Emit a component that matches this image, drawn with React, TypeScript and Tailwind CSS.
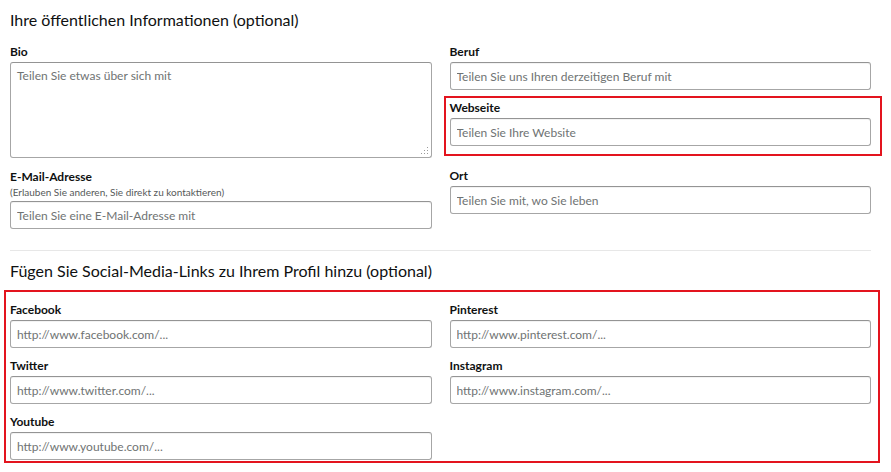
import React from "react";

function Label({ children }: { children: React.ReactNode }) {
  return <div className="text-[12px] leading-[16px] font-bold text-[#0f1111]">{children}</div>;
}

function TextInput({ placeholder }: { placeholder: string }) {
  return (
    <input
      type="text"
      placeholder={placeholder}
      className="block w-full h-[28px] rounded-[3px] border border-[#a6a6a6] border-t-[#949494] bg-white px-[6px] text-[12px] text-[#0f1111] placeholder:text-[#6f7373] outline-none shadow-[inset_0_1px_0_rgba(15,17,17,0.05)]"
    />
  );
}

function Field({ label, placeholder, className = "" }: { label: string; placeholder: string; className?: string }) {
  return (
    <div className={className}>
      <Label>{label}</Label>
      <div className="mt-[2px]">
        <TextInput placeholder={placeholder} />
      </div>
    </div>
  );
}

export default function App() {
  return (
    <div className="w-[891px] h-[472px] overflow-hidden bg-white font-['Lato',sans-serif] text-[#0f1111]">
      <div className="pl-[10px] pr-[20px] pt-[10px]">
        <h2 className="text-[16px] leading-[20px] font-normal">Ihre öffentlichen Informationen (optional)</h2>

        <div className="mt-[14px] grid grid-cols-2 gap-x-[18px]">
          {/* left column */}
          <div>
            <Label>Bio</Label>
            <div className="relative mt-[2px]">
              <textarea
                placeholder="Teilen Sie etwas über sich mit"
                className="block w-full h-[96px] resize-none rounded-[3px] border border-[#a6a6a6] border-t-[#949494] bg-white px-[6px] pt-[4px] text-[12px] leading-[17px] placeholder:text-[#6f7373] outline-none"
              />
              <svg className="absolute right-[3px] bottom-[3px]" width="9" height="9" viewBox="0 0 9 9">
                <g fill="#9a9a9a">
                  <rect x="7" y="1" width="1" height="1" />
                  <rect x="4" y="4" width="1" height="1" />
                  <rect x="7" y="4" width="1" height="1" />
                  <rect x="1" y="7" width="1" height="1" />
                  <rect x="4" y="7" width="1" height="1" />
                  <rect x="7" y="7" width="1" height="1" />
                </g>
              </svg>
            </div>

            <div className="mt-[11px]">
              <Label>E-Mail-Adresse</Label>
              <div className="text-[10px] leading-[15px] text-[#565959]">(Erlauben Sie anderen, Sie direkt zu kontaktieren)</div>
              <div className="mt-[1px]">
                <TextInput placeholder="Teilen Sie eine E-Mail-Adresse mit" />
              </div>
            </div>
          </div>

          {/* right column */}
          <div>
            <Field label="Beruf" placeholder="Teilen Sie uns Ihren derzeitigen Beruf mit" />
            <div className="mt-[6px] ml-[-6px] mr-[-11px] border-2 border-[#e3141e] pl-[4px] pr-[9px] pt-[2px] pb-[8px]">
              <Field label="Webseite" placeholder="Teilen Sie Ihre Website" />
            </div>
            <Field className="mt-[12px]" label="Ort" placeholder="Teilen Sie mit, wo Sie leben" />
          </div>
        </div>

        <div className="mt-[21px] h-px bg-[#e7e7e7]" />

        <h2 className="mt-[10px] text-[16px] leading-[20px] font-normal">Fügen Sie Social-Media-Links zu Ihrem Profil hinzu (optional)</h2>

        <div className="mt-[9px] ml-[-6px] mr-[-9px] border-2 border-[#e3141e] pl-[4px] pr-[7px] pt-[10px] pb-[1px]">
          <div className="grid grid-cols-2 gap-x-[18px] gap-y-[10px]">
            <Field label="Facebook" placeholder="http://www.facebook.com/..." />
            <Field label="Pinterest" placeholder="http://www.pinterest.com/..." />
            <Field label="Twitter" placeholder="http://www.twitter.com/..." />
            <Field label="Instagram" placeholder="http://www.instagram.com/..." />
            <Field label="Youtube" placeholder="http://www.youtube.com/..." />
          </div>
        </div>
      </div>
    </div>
  );
}
